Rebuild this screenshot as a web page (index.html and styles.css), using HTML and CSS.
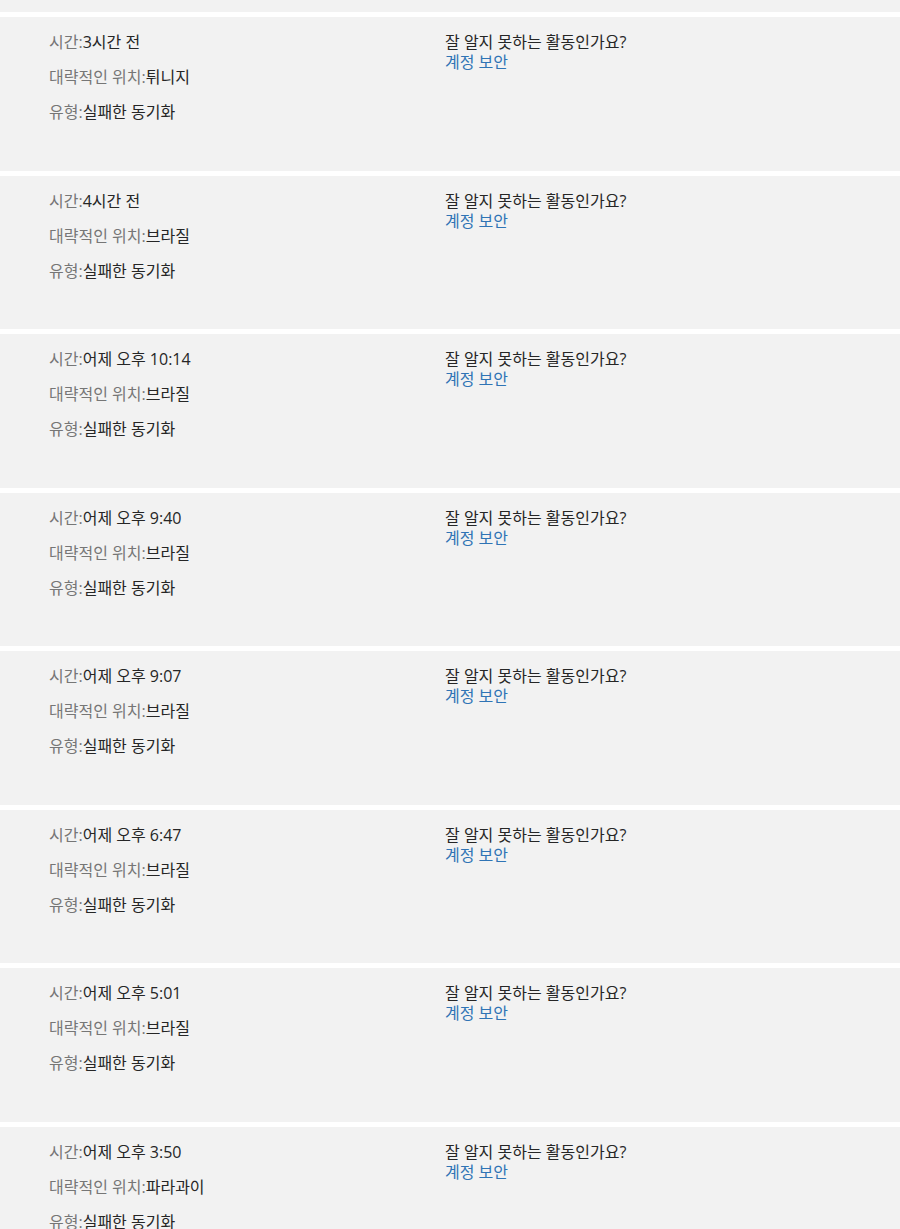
FILE: index.html
```html
<!DOCTYPE html>
<html lang="ko">
<head>
<meta charset="utf-8">
<link rel="stylesheet" href="styles.css">
</head>
<body>
<div class="list">
  <div class="card card-prev"></div>

  <div class="card">
    <div class="info">
      <div class="row"><span class="label">시간:</span><span class="value">3시간 전</span></div>
      <div class="row"><span class="label">대략적인 위치:</span><span class="value">튀니지</span></div>
      <div class="row"><span class="label">유형:</span><span class="value">실패한 동기화</span></div>
    </div>
    <div class="help"><div class="q">잘 알지 못하는 활동인가요?</div><a class="link" href="#">계정 보안</a></div>
  </div>

  <div class="card">
    <div class="info">
      <div class="row"><span class="label">시간:</span><span class="value">4시간 전</span></div>
      <div class="row"><span class="label">대략적인 위치:</span><span class="value">브라질</span></div>
      <div class="row"><span class="label">유형:</span><span class="value">실패한 동기화</span></div>
    </div>
    <div class="help"><div class="q">잘 알지 못하는 활동인가요?</div><a class="link" href="#">계정 보안</a></div>
  </div>

  <div class="card">
    <div class="info">
      <div class="row"><span class="label">시간:</span><span class="value">어제 오후 10:14</span></div>
      <div class="row"><span class="label">대략적인 위치:</span><span class="value">브라질</span></div>
      <div class="row"><span class="label">유형:</span><span class="value">실패한 동기화</span></div>
    </div>
    <div class="help"><div class="q">잘 알지 못하는 활동인가요?</div><a class="link" href="#">계정 보안</a></div>
  </div>

  <div class="card">
    <div class="info">
      <div class="row"><span class="label">시간:</span><span class="value">어제 오후 9:40</span></div>
      <div class="row"><span class="label">대략적인 위치:</span><span class="value">브라질</span></div>
      <div class="row"><span class="label">유형:</span><span class="value">실패한 동기화</span></div>
    </div>
    <div class="help"><div class="q">잘 알지 못하는 활동인가요?</div><a class="link" href="#">계정 보안</a></div>
  </div>

  <div class="card">
    <div class="info">
      <div class="row"><span class="label">시간:</span><span class="value">어제 오후 9:07</span></div>
      <div class="row"><span class="label">대략적인 위치:</span><span class="value">브라질</span></div>
      <div class="row"><span class="label">유형:</span><span class="value">실패한 동기화</span></div>
    </div>
    <div class="help"><div class="q">잘 알지 못하는 활동인가요?</div><a class="link" href="#">계정 보안</a></div>
  </div>

  <div class="card">
    <div class="info">
      <div class="row"><span class="label">시간:</span><span class="value">어제 오후 6:47</span></div>
      <div class="row"><span class="label">대략적인 위치:</span><span class="value">브라질</span></div>
      <div class="row"><span class="label">유형:</span><span class="value">실패한 동기화</span></div>
    </div>
    <div class="help"><div class="q">잘 알지 못하는 활동인가요?</div><a class="link" href="#">계정 보안</a></div>
  </div>

  <div class="card">
    <div class="info">
      <div class="row"><span class="label">시간:</span><span class="value">어제 오후 5:01</span></div>
      <div class="row"><span class="label">대략적인 위치:</span><span class="value">브라질</span></div>
      <div class="row"><span class="label">유형:</span><span class="value">실패한 동기화</span></div>
    </div>
    <div class="help"><div class="q">잘 알지 못하는 활동인가요?</div><a class="link" href="#">계정 보안</a></div>
  </div>

  <div class="card">
    <div class="info">
      <div class="row"><span class="label">시간:</span><span class="value">어제 오후 3:50</span></div>
      <div class="row"><span class="label">대략적인 위치:</span><span class="value">파라과이</span></div>
      <div class="row"><span class="label">유형:</span><span class="value">실패한 동기화</span></div>
    </div>
    <div class="help"><div class="q">잘 알지 못하는 활동인가요?</div><a class="link" href="#">계정 보안</a></div>
  </div>
</div>
</body>
</html>
```
FILE: styles.css
```css
html, body {
  margin: 0;
  padding: 0;
  background: #ffffff;
}
body {
  font-family: "Open Sans", "Noto Sans CJK KR", sans-serif;
  font-size: 16px;
  color: #262626;
  overflow: hidden;
}
.list {
  display: flex;
  flex-direction: column;
  gap: 5px;
}
.card {
  background: #f2f2f2;
  height: 153.5px;
  box-sizing: border-box;
  padding: 15px 0 0 49px;
  display: grid;
  grid-template-columns: 396px 1fr;
  align-items: start;
}
.card-prev {
  height: 12px;
  padding: 0;
}
.info {
  display: flex;
  flex-direction: column;
  gap: 15px;
}
.row {
  line-height: 20px;
  height: 20px;
  white-space: nowrap;
}
.label {
  color: #767676;
}
.value {
  color: #262626;
}
.help {
  line-height: 20px;
}
.q {
  color: #262626;
}
.link {
  color: #2f74b5;
  text-decoration: none;
}
```
